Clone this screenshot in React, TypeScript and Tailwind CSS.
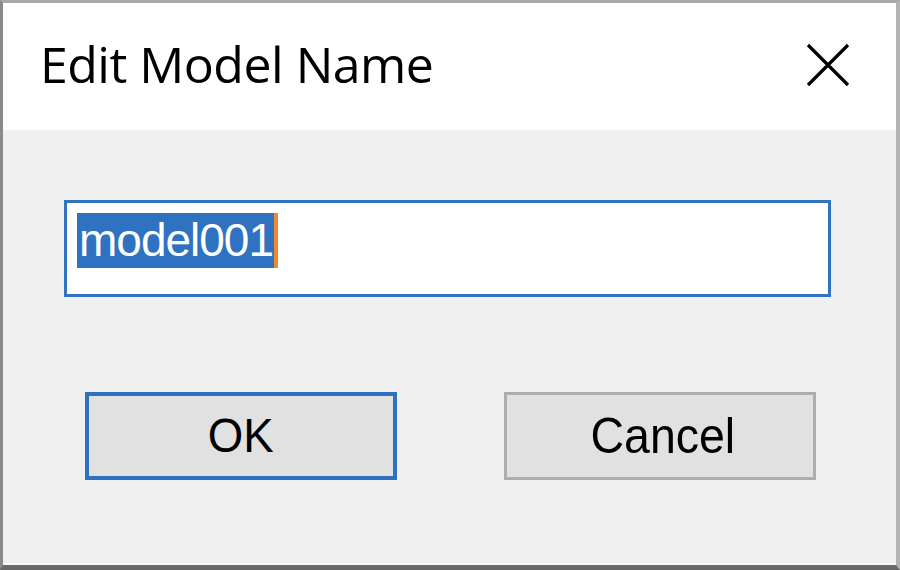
import { useState } from "react";

const EditModelNameDialog: React.FC = () => {
    const [name, setName] = useState("model001");

    return (
        <div className="w-[900px] h-[570px] flex flex-col border-t-[3px] border-l-[3px] border-r-[4px] border-b-[5px] border-t-[#a9a9a9] border-l-[#8a8a8a] border-r-[#b4b4b4] border-b-[#6a6a6a] bg-[#f0f0f0] font-['Open_Sans',sans-serif]">
            <div className="h-[127px] bg-white flex items-center justify-between pl-[37px] pr-[46px]">
                <h1 className="text-[50px] leading-none text-black tracking-[-0.5px] pb-[6px]">Edit Model Name</h1>
                <button className="w-[44px] h-[44px] flex items-center justify-center mt-[-4px]">
                    <svg width="44" height="44" viewBox="0 0 44 44">
                        <path d="M2 2 L42 42 M42 2 L2 42" stroke="#000" strokeWidth="3.2" />
                    </svg>
                </button>
            </div>

            <div className="flex-1 flex flex-col pl-[61px] pr-[65px] pt-[70px] border-b-[2px] border-[#fafafa]">
                <div className="h-[97px] border-[3px] border-[#3173c1] bg-white flex items-center pl-[10px] pb-[16px]">
                    <span className="bg-[#3072c2] text-white text-[46px] leading-[55px] h-[55px] pl-[2px] pr-[1px] font-['Liberation_Sans',sans-serif] tracking-[-1px] border-r-[4px] border-[#f0892e]">
                        {name}
                    </span>
                    <input className="hidden" value={name} onChange={(e) => setName(e.target.value)} />
                </div>

                <div className="flex justify-between mt-[95px] pl-[21px] pr-[15px]">
                    <button className="w-[312px] h-[88px] border-[4px] border-[#2e71bf] bg-[#e1e1e1] flex items-center justify-center text-[48px] text-black font-['Liberation_Sans',sans-serif]">
                        <span className="scale-x-[0.95] inline-block">OK</span>
                    </button>
                    <button className="w-[312px] h-[88px] border-[3px] border-[#adadad] bg-[#e1e1e1] flex items-center justify-center pl-[6px] text-[50px] text-black font-['Liberation_Sans',sans-serif]">
                        <span className="scale-x-[0.93] inline-block">Cancel</span>
                    </button>
                </div>
            </div>
        </div>
    );
};

export default function App() {
    return <EditModelNameDialog />;
}
